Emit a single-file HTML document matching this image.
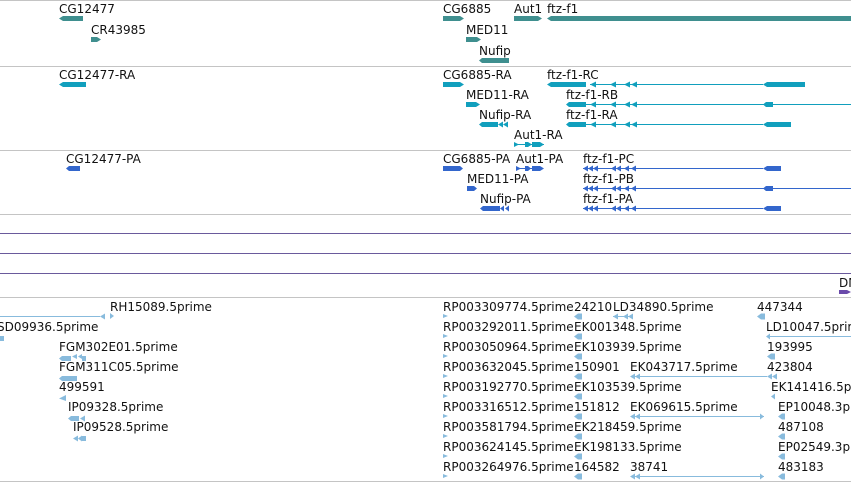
<!DOCTYPE html>
<html><head><style>
html,body{margin:0;padding:0;background:#fff;width:851px;height:482px;overflow:hidden}
svg text{font-family:"DejaVu Sans","Liberation Sans",sans-serif;font-size:12px;fill:#111}
</style></head><body>
<svg width="851" height="482" xmlns="http://www.w3.org/2000/svg">
<g stroke="#c4c4c4" stroke-width="1">
<line x1="0" y1="0.5" x2="851" y2="0.5"/><line x1="0" y1="66.5" x2="851" y2="66.5"/>
<line x1="0" y1="150.5" x2="851" y2="150.5"/><line x1="0" y1="214.5" x2="851" y2="214.5"/>
<line x1="0" y1="297.5" x2="851" y2="297.5"/><line x1="0" y1="481.5" x2="851" y2="481.5"/>
</g>
<g stroke="#6a5a9c"><line x1="0" y1="233.5" x2="851" y2="233.5"/><line x1="0" y1="253.5" x2="851" y2="253.5"/><line x1="0" y1="273.5" x2="851" y2="273.5"/></g>
<text x="839" y="287">DM</text><path d="M839 290h8l4 2-4 2h-8z" fill="#6a4aaa"/>

<!-- genes -->
<text x="59" y="13">CG12477</text><path d="M63 16h20v5h-20l-4-2.5z" fill="#3f8f8f"/>
<text x="91" y="34">CR43985</text><path d="M91 37h6l4 2.5-4 2.5h-6z" fill="#3f8f8f"/>
<text x="443" y="13">CG6885</text><path d="M443 16h17l4 2.5-4 2.5h-17z" fill="#3f8f8f"/>
<text x="514" y="13">Aut1</text><path d="M514 16h24l4 2.5-4 2.5h-24z" fill="#3f8f8f"/>
<text x="547" y="13">ftz-f1</text><path d="M551 16h300v5h-300l-4-2.5z" fill="#3f8f8f"/>
<text x="466" y="34">MED11</text><path d="M466 37h11l4 2.5-4 2.5h-11z" fill="#3f8f8f"/>
<text x="479" y="55">Nufip</text><path d="M482 58h27v5h-27l-3-2.5z" fill="#3f8f8f"/>

<!-- transcripts -->
<g fill="#119fbd" stroke="#119fbd">
<text x="59" y="79" stroke="none">CG12477-RA</text><path d="M63 82h23v5h-23l-4-2.5z" stroke="none"/>
<text x="443" y="79" stroke="none">CG6885-RA</text><path d="M443 82h17l4 2.5-4 2.5h-17z" stroke="none"/>
<text x="547" y="79" stroke="none">ftz-f1-RC</text>
<line x1="590" y1="84.5" x2="763" y2="84.5"/>
<path d="M551 82h35v5h-35l-4-2.5z" stroke="none"/><path d="M590 84.5l6-3v6zM610 84.5l6-3v6zM624 84.5l6-3v6zM631 84.5l6-3v6zM767 82h38v5h-38l-4-2.5z" stroke="none"/>
<text x="466" y="99" stroke="none">MED11-RA</text><path d="M466 102h10l4 2.5-4 2.5h-10z" stroke="none"/>
<text x="566" y="99" stroke="none">ftz-f1-RB</text>
<line x1="586" y1="104.5" x2="851" y2="104.5"/>
<path d="M569 102h17v5h-17l-3-2.5zM590 104.5l6-3v6zM610 104.5l6-3v6zM624 104.5l6-3v6zM631 104.5l6-3v6zM766 102h7v5h-7l-3-2.5z" stroke="none"/>
<text x="479" y="119" stroke="none">Nufip-RA</text><path d="M482 122h16v5h-16l-3-2.5zM498 124.5l5-3v6zM503 124.5l5-3v6z" stroke="none"/>
<text x="566" y="119" stroke="none">ftz-f1-RA</text>
<line x1="586" y1="124.5" x2="763" y2="124.5"/>
<path d="M569 122h17v5h-17l-3-2.5zM590 124.5l6-3v6zM610 124.5l6-3v6zM624 124.5l6-3v6zM631 124.5l6-3v6zM767 122h24v5h-24l-4-2.5z" stroke="none"/>
<text x="514" y="139" stroke="none">Aut1-RA</text><line x1="514" y1="144.5" x2="544" y2="144.5"/><path d="M514 142l5 2.5-5 2.5zM525 142h3l4 2.5-4 2.5h-3zM532 142h8l4 2.5-4 2.5h-8z" stroke="none"/>
</g>

<!-- proteins -->
<g fill="#3366cc" stroke="#3366cc">
<text x="66" y="163" stroke="none">CG12477-PA</text><path d="M69 166h11v5h-11l-3-2.5z" stroke="none"/>
<text x="443" y="163" stroke="none">CG6885-PA</text><path d="M443 166h17l3 2.5-3 2.5h-17z" stroke="none"/>
<text x="516" y="163" stroke="none">Aut1-PA</text><path d="M516 166l5 2.5-5 2.5zM525 166h3l3 2.5-3 2.5h-3zM532 166h8l4 2.5-4 2.5h-8z" stroke="none"/><line x1="516" y1="168.5" x2="540" y2="168.5"/>
<text x="467" y="183" stroke="none">MED11-PA</text><path d="M467 186h7l3 2.5-3 2.5h-7z" stroke="none"/>
<text x="480" y="203" stroke="none">Nufip-PA</text><path d="M483 206h17v5h-17l-3-2.5zM500 208.5l4-3v6zM505 208.5l4-3v6z" stroke="none"/>
<text x="583" y="163" stroke="none">ftz-f1-PC</text><text x="583" y="183" stroke="none">ftz-f1-PB</text><text x="583" y="203" stroke="none">ftz-f1-PA</text>
<line x1="583" y1="168.5" x2="763" y2="168.5"/><line x1="583" y1="188.5" x2="851" y2="188.5"/><line x1="583" y1="208.5" x2="763" y2="208.5"/>
<path id="pa" d="M583 168.5l5-3v6zM588 168.5l5-3v6zM593 168.5l5-3v6zM611 168.5l5-3v6zM616 168.5l5-3v6zM624 168.5l5-3v6zM631 168.5l5-3v6zM767 166h14v5h-14l-4-2.5z" stroke="none"/>
<path d="M583 188.5l5-3v6zM588 188.5l5-3v6zM593 188.5l5-3v6zM611 188.5l5-3v6zM616 188.5l5-3v6zM624 188.5l5-3v6zM631 188.5l5-3v6zM766 186h7v5h-7l-3-2.5z" stroke="none"/>
<path d="M583 208.5l5-3v6zM588 208.5l5-3v6zM593 208.5l5-3v6zM611 208.5l5-3v6zM616 208.5l5-3v6zM624 208.5l5-3v6zM631 208.5l5-3v6zM767 206h14v5h-14l-4-2.5z" stroke="none"/>
</g>

<!-- ESTs -->
<g fill="#88bbdd" stroke="#88bbdd">
<g stroke="none" fill="#111">
<text x="110" y="311">RH15089.5prime</text>
<text x="-3" y="331">SD09936.5prime</text>
<text x="59" y="351">FGM302E01.5prime</text>
<text x="59" y="371">FGM311C05.5prime</text>
<text x="59" y="391">499591</text>
<text x="68" y="411">IP09328.5prime</text>
<text x="73" y="431">IP09528.5prime</text>
<text x="443" y="311">RP003309774.5prime</text><text x="574" y="311">24210</text><text x="613" y="311">LD34890.5prime</text><text x="757" y="311">447344</text>
<text x="443" y="331">RP003292011.5prime</text><text x="574" y="331">EK001348.5prime</text><text x="766" y="331">LD10047.5prime</text>
<text x="443" y="351">RP003050964.5prime</text><text x="574" y="351">EK103939.5prime</text><text x="767" y="351">193995</text>
<text x="443" y="371">RP003632045.5prime</text><text x="574" y="371">150901</text><text x="630" y="371">EK043717.5prime</text><text x="767" y="371">423804</text>
<text x="443" y="391">RP003192770.5prime</text><text x="574" y="391">EK103539.5prime</text><text x="771" y="391">EK141416.5prime</text>
<text x="443" y="411">RP003316512.5prime</text><text x="574" y="411">151812</text><text x="630" y="411">EK069615.5prime</text><text x="778" y="411">EP10048.3prime</text>
<text x="443" y="431">RP003581794.5prime</text><text x="574" y="431">EK218459.5prime</text><text x="778" y="431">487108</text>
<text x="443" y="451">RP003624145.5prime</text><text x="574" y="451">EK198133.5prime</text><text x="778" y="451">EP02549.3prime</text>
<text x="443" y="471">RP003264976.5prime</text><text x="574" y="471">164582</text><text x="630" y="471">38741</text><text x="778" y="471">483183</text>
</g>
<line x1="0" y1="316.5" x2="100" y2="316.5"/><path d="M100 316.5l5-3v6zM110 313l4 3-4 3z" stroke="none"/>
<path d="M0 336h4v5h-4z" stroke="none"/>
<path d="M62 356h9v5h-9l-3-2.5zM72 356.5l5-2.5v5zM78 356.5l4-2.5v5zM82 356h4v5h-4z" stroke="none"/>
<path d="M62 376h15v5h-15l-3-2.5z" stroke="none"/>
<path d="M59 398.5l7-3.5v6z" stroke="none"/>
<path d="M71 416h8v5h-8l-3-2.5zM80 418.5l5-3v6z" stroke="none"/>
<path d="M73 438.5l5-3v6zM78 438.5l4-3v6zM82 436h4v5h-4z" stroke="none"/>
<g stroke="none">
<path d="M443 314l5 2-5 2zM443 334l5 2-5 2zM443 354l5 2-5 2zM443 374l5 2-5 2zM443 394l5 2-5 2zM443 414l5 2-5 2zM443 434l5 2-5 2zM443 454l5 2-5 2zM443 474l5 2-5 2z"/>
<path d="M574 316.5l4-3h4v6h-4zM574 336.5l4-3h4v6h-4zM574 356.5l4-3h4v6h-4zM574 376.5l4-3h4v6h-4zM574 396.5l4-3h4v6h-4zM574 416.5l4-3h4v6h-4zM574 436.5l4-3h4v6h-4zM574 456.5l4-3h4v6h-4zM574 476.5l4-3h4v6h-4z"/>
<path d="M757 316.5l4-3h4v6h-4zM766 336.5l4-3v6zM767 356.5l4-3h4v6h-4zM767 376.5l5-3v6zM772 376.5l5-3v6zM771 396.5l4-3v6zM778 416.5l4-3h3v6h-3zM778 436.5l4-3h3v6h-3zM778 456.5l4-3h3v6h-3zM778 476.5l4-3h3v6h-3z"/>
<path d="M613 316.5l5-3v6zM623 316.5l5-3v6zM628 316.5l5-3v6zM630 376.5l5-3v6zM635 376.5l5-3v6zM630 416.5l5-3v6zM635 416.5l5-3v6zM630 476.5l5-3v6zM635 476.5l5-3v6zM764 416.5l-4-3v6zM764 476.5l-4-3v6z"/>
</g>
<line x1="613" y1="316.5" x2="632" y2="316.5"/>
<line x1="770" y1="336.5" x2="851" y2="336.5"/>
<line x1="635" y1="376.5" x2="767" y2="376.5"/>
<line x1="635" y1="416.5" x2="764" y2="416.5"/>
<line x1="635" y1="476.5" x2="764" y2="476.5"/>
</g>
</svg>
</body></html>
